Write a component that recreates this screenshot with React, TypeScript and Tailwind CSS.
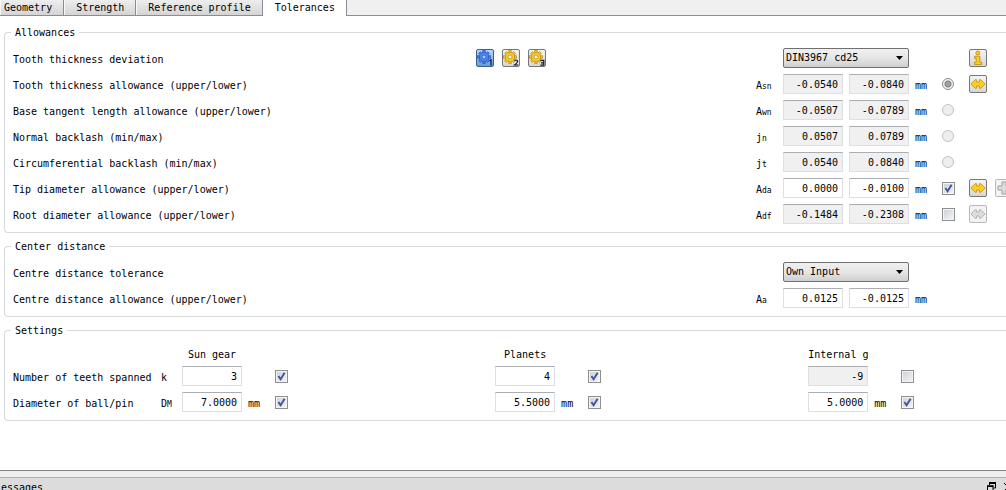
import React, { useState } from 'react';
import clsx from 'clsx';

type AllowanceRow = {
  label: string;
  symbol: string;
  sub: string;
  upper: string;
  lower: string;
  readOnly?: boolean;
};

const TABS = ['Geometry', 'Strength', 'Reference profile', 'Tolerances'];

const THICKNESS_ROWS: AllowanceRow[] = [
  { label: 'Tooth thickness allowance (upper/lower)', symbol: 'A', sub: 'sn', upper: '-0.0540', lower: '-0.0840', readOnly: true },
  { label: 'Base tangent length allowance (upper/lower)', symbol: 'A', sub: 'wn', upper: '-0.0507', lower: '-0.0789', readOnly: true },
  { label: 'Normal backlash (min/max)', symbol: 'j', sub: 'n', upper: '0.0507', lower: '0.0789', readOnly: true },
  { label: 'Circumferential backlash (min/max)', symbol: 'j', sub: 't', upper: '0.0540', lower: '0.0840', readOnly: true },
];

const TIP_ROW: AllowanceRow = { label: 'Tip diameter allowance (upper/lower)', symbol: 'A', sub: 'da', upper: '0.0000', lower: '-0.0100' };
const ROOT_ROW: AllowanceRow = { label: 'Root diameter allowance (upper/lower)', symbol: 'A', sub: 'df', upper: '-0.1484', lower: '-0.2308', readOnly: true };
const CENTRE_ROW: AllowanceRow = { label: 'Centre distance allowance (upper/lower)', symbol: 'A', sub: 'a', upper: '0.0125', lower: '-0.0125' };

const GEARS = [
  { name: 'Sun gear', teeth: '3', teethOn: true, pin: '7.0000' },
  { name: 'Planets', teeth: '4', teethOn: true, pin: '5.5000' },
  { name: 'Internal g', teeth: '-9', teethOn: false, pin: '5.0000' },
];

function GearIcon({ n, active }: { n: number; active?: boolean }) {
  const fill = active ? '#4f86ea' : '#f8cb2c';
  const line = active ? '#1f4fc0' : '#b8860b';
  return (
    <svg viewBox="0 0 16 16" className="size-4" aria-hidden="true">
      <g fill={fill} stroke={line} strokeWidth="0.7">
        {[0, 45, 90, 135, 180, 225, 270, 315].map((a) => (
          <rect key={a} x="5.8" y="0.6" width="2.4" height="3.4" transform={`rotate(${a} 7 7)`} />
        ))}
        <circle cx="7" cy="7" r="4.6" />
      </g>
      <circle cx="7" cy="7" r="4.2" fill={fill} />
      <circle cx="7" cy="7" r="2" fill={active ? '#a9cdf5' : '#f4f4f4'} stroke={line} strokeWidth="0.7" />
      <g fill="none" stroke="#101040" strokeWidth="1.2">
        {n === 1 && <path d="M12.5 10.8 L14 9.8 V15.6" />}
        {n === 2 && <path d="M11.4 10.6 Q13 9.4 14.4 10.6 Q15.2 12 11.6 15 H15.4" />}
        {n === 3 && <path d="M11.4 10.4 H14.8 V15.2 H11.4 M12 12.8 H14.8" />}
      </g>
    </svg>
  );
}

function ArrowsIcon({ muted }: { muted?: boolean }) {
  return (
    <svg viewBox="0 0 16 16" className="size-4" aria-hidden="true">
      <path
        d="M1 8 L5 3.8 H6.6 V6 H9.4 V3.8 H11 L15 8 L11 12.2 H9.4 V10 H6.6 V12.2 H5 Z"
        fill={muted ? '#dcdcdc' : '#fdcf1c'}
        stroke={muted ? '#b0b0b0' : '#c8941c'}
        strokeWidth="0.9"
        strokeLinejoin="round"
      />
    </svg>
  );
}

function InfoIcon() {
  return (
    <svg viewBox="0 0 16 16" className="size-4" aria-hidden="true">
      <g fill="#fdcf1c" stroke="#b8860b" strokeWidth="0.8" strokeLinejoin="round">
        <circle cx="7.8" cy="3" r="2" />
        <path d="M4.6 6.2 H9.8 V12.2 H11.6 V14.6 H4.4 V12.2 H6.2 V8.4 H4.6 Z" />
      </g>
    </svg>
  );
}

function PlusIcon() {
  return (
    <svg viewBox="0 0 16 16" className="size-4" aria-hidden="true">
      <path d="M6 2 H10 V6 H14 V10 H10 V14 H6 V10 H2 V6 H6 Z" fill="#dcdcdc" stroke="#a0a0a0" />
    </svg>
  );
}

function ToolButton({ label, active, disabled, children }: { label: string; active?: boolean; disabled?: boolean; children: React.ReactNode }) {
  return (
    <button
      type="button"
      aria-label={label}
      disabled={disabled}
      className={clsx(
        'flex size-[18px] shrink-0 items-center justify-center rounded-xs border',
        active && 'border-[#3b6188] bg-linear-to-b from-[#b5d9fa] to-[#5e9fd8]',
        !active && !disabled && 'border-[#777777] bg-linear-to-b from-[#f4f4f4] to-[#d6d6d6]',
        disabled && 'border-[#b8b8b8] bg-[#f3f3f3]'
      )}
    >
      {children}
    </button>
  );
}

function NumberField({ label, value, readOnly }: { label: string; value: string; readOnly?: boolean }) {
  return (
    <input
      type="text"
      aria-label={label}
      defaultValue={value}
      readOnly={readOnly}
      className={clsx(
        'h-5 w-[60px] shrink-0 border border-[#dcdfe3] border-t-[#abadb3] pr-1 text-right outline-none',
        readOnly ? 'bg-[#f0f0f0]' : 'bg-white'
      )}
    />
  );
}

function CheckBox({ label, checked }: { label: string; checked?: boolean }) {
  const [on, setOn] = useState(!!checked);
  return (
    <span className="relative size-[13px] shrink-0">
      <input
        type="checkbox"
        aria-label={label}
        checked={on}
        onChange={() => setOn(!on)}
        className="block size-[13px] appearance-none border border-[#8e8f8f] bg-linear-to-br from-[#cbcfd5] to-[#f6f6f6] shadow-[inset_0_0_0_1px_#f4f4f4]"
      />
      {on && (
        <svg viewBox="0 0 13 13" className="pointer-events-none absolute inset-0" aria-hidden="true">
          <path d="M3.4 6 L5.6 9.2 L9.6 2.8" fill="none" stroke="#42589c" strokeWidth="2" />
        </svg>
      )}
    </span>
  );
}

function Radio({ label, checked }: { label: string; checked?: boolean }) {
  return (
    <input
      type="radio"
      name="thickness-source"
      aria-label={label}
      defaultChecked={checked}
      className="size-3 shrink-0 appearance-none rounded-full border border-[#c3c3c3] bg-[#eeeeee] checked:border-[#8e8f8f] checked:bg-[radial-gradient(circle,#a0a0a0_0_2px,#808080_3px,#f4f4f4_4px)]"
    />
  );
}

function Select({ id, options }: { id: string; options: string[] }) {
  return (
    <div className="relative w-[126px] shrink-0">
      <select
        id={id}
        className="block h-5 w-full appearance-none rounded-xs border border-[#707070] bg-linear-to-b from-[#f0f0f0] via-[#e6e6e6] via-50% to-[#cfcfcf] pl-0.5 outline-none"
      >
        {options.map((o) => (
          <option key={o}>{o}</option>
        ))}
      </select>
      <svg viewBox="0 0 7 4" className="pointer-events-none absolute top-2 right-1.5 h-1 w-[7px]" aria-hidden="true">
        <path d="M0 0 H7 L3.5 4 Z" fill="#000" />
      </svg>
    </div>
  );
}

function Symbol({ base, sub }: { base: string; sub: string }) {
  return (
    <span className="w-[27px] shrink-0 pt-1">
      {base}
      <sub className="bottom-0 align-baseline text-[8px] leading-none">{sub}</sub>
    </span>
  );
}

function Group({ title, children }: { title: string; children: React.ReactNode }) {
  return (
    <fieldset className="ml-1 min-w-0 rounded-l-sm border border-r-0 border-[#d5dadc] py-2 pl-2">
      <legend className="-ml-0.5 h-4 px-1 leading-[18px]">{title}</legend>
      <div className="flex flex-col gap-1.5">{children}</div>
    </fieldset>
  );
}

function FormRow({ label, htmlFor, middle, children }: { label: string; htmlFor?: string; middle?: React.ReactNode; children: React.ReactNode }) {
  return (
    <div className="flex h-5 items-center">
      <div className="grid min-w-0 flex-1 grid-cols-[463fr_280fr] items-center">
        <label htmlFor={htmlFor} className="pt-1 whitespace-nowrap">{label}</label>
        <div className="flex gap-2">{middle}</div>
      </div>
      <div className="flex w-[250px] shrink-0 items-center overflow-hidden">{children}</div>
    </div>
  );
}

function AllowanceLine({ row, children }: { row: AllowanceRow; children?: React.ReactNode }) {
  return (
    <FormRow label={row.label}>
      <Symbol base={row.symbol} sub={row.sub} />
      <div className="flex shrink-0 gap-1.5">
        <NumberField label={`${row.label} 1`} value={row.upper} readOnly={row.readOnly} />
        <NumberField label={`${row.label} 2`} value={row.lower} readOnly={row.readOnly} />
      </div>
      <span className="w-[33px] shrink-0 pt-1 pl-1.5">mm</span>
      {children}
    </FormRow>
  );
}

export default function App() {
  const [tab, setTab] = useState('Tolerances');

  return (
    <div className="flex h-screen flex-col overflow-hidden bg-white font-['DejaVu_Sans_Mono','Liberation_Mono',monospace] text-[10px] leading-4 text-black">
      <nav className="flex h-4 shrink-0 bg-[#f0f0f0]">
        {TABS.map((t, i) => (
          <button
            key={t}
            type="button"
            onClick={() => setTab(t)}
            className={clsx(
              'h-4 border-r border-[#8b8c95] pr-[11px] whitespace-nowrap',
              i === 0 ? 'pl-1' : 'pl-3',
              t === tab ? 'bg-white leading-[14px]' : 'border-b bg-linear-to-b from-[#eeeeee] to-[#d4d4d4] leading-4 shadow-[inset_1px_0_0_#fafafa]'
            )}
          >
            {t}
          </button>
        ))}
        <div className="flex-1 border-b border-[#8b8c95]" />
      </nav>

      <main className="flex flex-1 flex-col gap-[5px] pt-2">
        <Group title="Allowances">
          <FormRow
            label="Tooth thickness deviation"
            htmlFor="thickness"
            middle={
              <>
                <ToolButton label="Gear 1" active><GearIcon n={1} active /></ToolButton>
                <ToolButton label="Gear 2"><GearIcon n={2} /></ToolButton>
                <ToolButton label="Gear 3"><GearIcon n={3} /></ToolButton>
              </>
            }
          >
            <span className="w-[27px] shrink-0" />
            <Select id="thickness" options={['DIN3967 cd25', 'Own Input']} />
            <span className="w-[60px] shrink-0" />
            <ToolButton label="Information"><InfoIcon /></ToolButton>
          </FormRow>

          {THICKNESS_ROWS.map((row, i) => (
            <AllowanceLine key={row.label} row={row}>
              <span className="flex w-[27px] shrink-0"><Radio label={row.label} checked={i === 0} /></span>
              {i === 0 && <ToolButton label="Convert thickness"><ArrowsIcon /></ToolButton>}
            </AllowanceLine>
          ))}

          <AllowanceLine row={TIP_ROW}>
            <span className="flex w-[27px] shrink-0"><CheckBox label={TIP_ROW.label} checked /></span>
            <div className="flex gap-2">
              <ToolButton label="Convert tip"><ArrowsIcon /></ToolButton>
              <ToolButton label="Add tip" disabled><PlusIcon /></ToolButton>
            </div>
          </AllowanceLine>
          <AllowanceLine row={ROOT_ROW}>
            <span className="flex w-[27px] shrink-0"><CheckBox label={ROOT_ROW.label} /></span>
            <ToolButton label="Convert root" disabled><ArrowsIcon muted /></ToolButton>
          </AllowanceLine>
        </Group>

        <Group title="Center distance">
          <FormRow label="Centre distance tolerance" htmlFor="centre">
            <span className="w-[27px] shrink-0" />
            <Select id="centre" options={['Own Input', 'DIN3967 cd25']} />
          </FormRow>
          <AllowanceLine row={CENTRE_ROW} />
        </Group>

        <Group title="Settings">
          <div className="grid grid-cols-[148px_21px_38fr_38fr_24fr] items-center gap-y-1.5">
            <span className="col-span-2" />
            {GEARS.map((g) => (
              <span key={g.name} className="h-3.5 w-[60px] text-center leading-[18px] whitespace-nowrap">{g.name}</span>
            ))}

            <span className="pt-1">Number of teeth spanned</span>
            <span className="pt-1">k</span>
            {GEARS.map((g) => (
              <div key={g.name} className="flex items-center">
                <NumberField label={`Teeth spanned, ${g.name}`} value={g.teeth} readOnly={!g.teethOn} />
                <span className="w-[33px] shrink-0" />
                <CheckBox label={`Set teeth spanned, ${g.name}`} checked={g.teethOn} />
              </div>
            ))}

            <span className="pt-1">Diameter of ball/pin</span>
            <Symbol base="D" sub="M" />
            {GEARS.map((g) => (
              <div key={g.name} className="flex items-center">
                <NumberField label={`Pin diameter, ${g.name}`} value={g.pin} />
                <span className="w-[33px] shrink-0 pt-1 pl-1.5">mm</span>
                <CheckBox label={`Set pin diameter, ${g.name}`} checked />
              </div>
            ))}
          </div>
        </Group>
      </main>

      <footer className="shrink-0 border-t border-[#828282]">
        <div className="h-1.5 bg-[#efefef]" />
        <div className="flex h-[13px] items-start justify-between overflow-hidden border-t border-[#b0b0b0] bg-[#dcdcdc] pl-px">
          <span className="pt-0.5">essages</span>
          <div className="flex gap-2 pt-1">
            <svg viewBox="0 0 9 9" className="size-[9px]" aria-hidden="true">
              <path d="M2.5 3 V1 H8.5 V6 H6.5" fill="none" stroke="#000" />
              <path d="M2 1 H9" stroke="#000" strokeWidth="2" />
              <rect x="0.5" y="4" width="5.5" height="4.5" fill="#dcdcdc" stroke="#000" />
              <path d="M0 4.2 H6.5" stroke="#000" strokeWidth="1.6" />
            </svg>
            <svg viewBox="0 0 2 9" className="h-[9px] w-0.5" aria-hidden="true">
              <path d="M0 1 L2 3 M0 9 L2 7" stroke="#000" />
            </svg>
          </div>
        </div>
      </footer>
    </div>
  );
}
